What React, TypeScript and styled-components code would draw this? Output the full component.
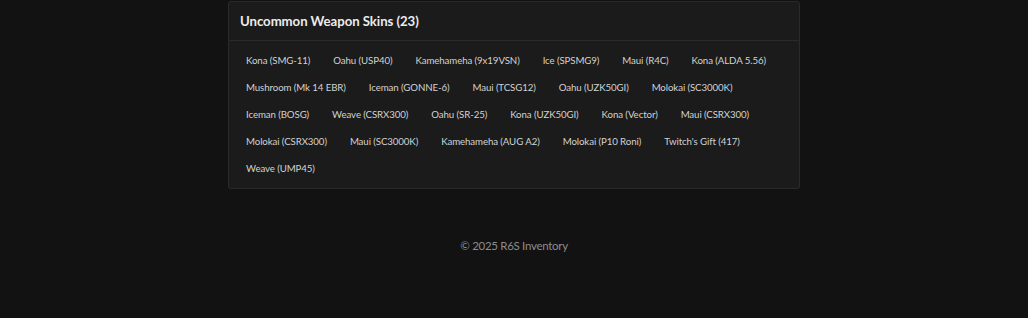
import React from "react";
import styled, { createGlobalStyle } from "styled-components";

const GlobalStyle = createGlobalStyle`
  html, body { margin: 0; padding: 0; background: #121212; }
  body { font-family: Lato, "Open Sans", sans-serif; color: #d6d6d6; }
`;

const Page = styled.div`
  display: flex;
  flex-direction: column;
  align-items: center;
  min-height: 318px;
`;

const Card = styled.section`
  width: 572px;
  box-sizing: border-box;
  margin-top: 1px;
  background: #1b1b1b;
  border: 1px solid #2a2a2a;
  border-radius: 3px;
`;

const Header = styled.header`
  height: 38px;
  display: flex;
  align-items: center;
  padding: 0 11px;
  border-bottom: 1px solid #2a2a2a;
`;

const Title = styled.h2`
  margin: 0;
  font-size: 13.2px;
  font-weight: 700;
  letter-spacing: -0.05px;
  color: #ececec;
`;

const Body = styled.div`
  display: flex;
  flex-wrap: wrap;
  column-gap: 11px;
  padding: 5px 11px 6px;
`;

const Chip = styled.span`
  height: 27.2px;
  display: flex;
  align-items: center;
  padding: 0 6px;
  font-size: 9.7px;
  letter-spacing: -0.1px;
  color: #d2d2d2;
  white-space: nowrap;
`;

const Footer = styled.footer`
  margin-top: 50px;
  font-size: 11.5px;
  letter-spacing: -0.3px;
  color: #8c8c8c;
`;

const skins = [
  "Kona (SMG-11)", "Oahu (USP40)", "Kamehameha (9x19VSN)", "Ice (SPSMG9)", "Maui (R4C)", "Kona (ALDA 5.56)",
  "Mushroom (Mk 14 EBR)", "Iceman (GONNE-6)", "Maui (TCSG12)", "Oahu (UZK50GI)", "Molokai (SC3000K)",
  "Iceman (BOSG)", "Weave (CSRX300)", "Oahu (SR-25)", "Kona (UZK50GI)", "Kona (Vector)", "Maui (CSRX300)",
  "Molokai (CSRX300)", "Maui (SC3000K)", "Kamehameha (AUG A2)", "Molokai (P10 Roni)", "Twitch's Gift (417)",
  "Weave (UMP45)",
];

export default function App() {
  return (
    <>
      <GlobalStyle />
      <Page>
        <Card>
          <Header>
            <Title>Uncommon Weapon Skins (23)</Title>
          </Header>
          <Body>
            {skins.map((s) => (
              <Chip key={s}>{s}</Chip>
            ))}
          </Body>
        </Card>
        <Footer>© 2025 R6S Inventory</Footer>
      </Page>
    </>
  );
}
